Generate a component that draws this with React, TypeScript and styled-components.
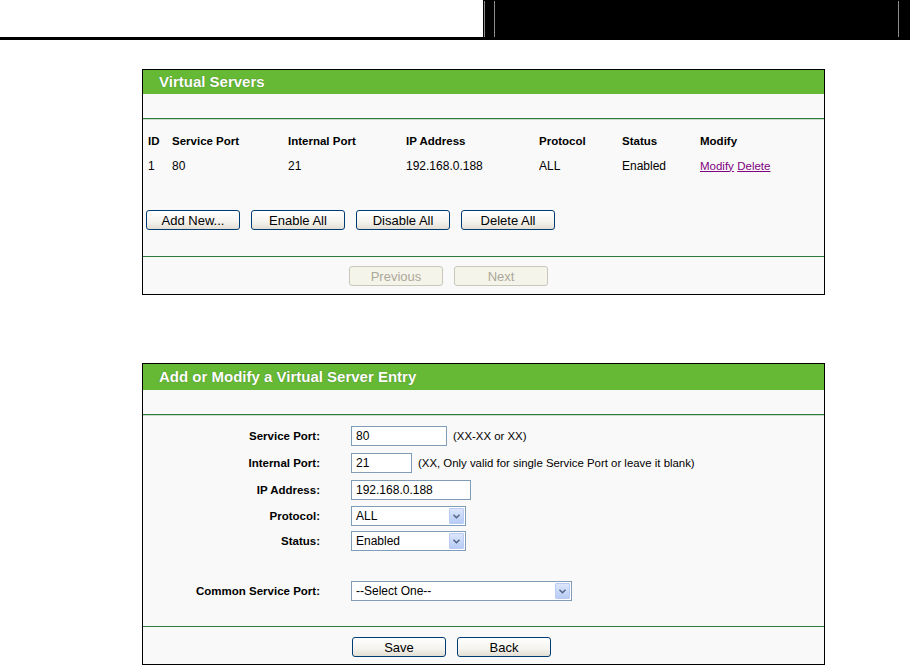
import React from 'react'
import styled, { createGlobalStyle } from 'styled-components'

const GlobalStyle = createGlobalStyle`
  body {
    margin: 0;
    background: #fff;
    font-family: "Liberation Sans", Arial, sans-serif;
    color: #000;
  }
`

const servers = [
  { id: 1, service: '80', internal: '21', ip: '192.168.0.188', protocol: 'ALL', status: 'Enabled' },
]

const fields = [
  { label: 'Service Port:', kind: 'input', value: '80', width: 96, hint: '(XX-XX or XX)', gap: 7 },
  { label: 'Internal Port:', kind: 'input', value: '21', width: 61, hint: '(XX, Only valid for single Service Port or leave it blank)', gap: 7 },
  { label: 'IP Address:', kind: 'input', value: '192.168.0.188', width: 120, gap: 6 },
  { label: 'Protocol:', kind: 'select', value: 'ALL', width: 115, gap: 5 },
  { label: 'Status:', kind: 'select', value: 'Enabled', width: 115, gap: 30 },
  { label: 'Common Service Port:', kind: 'select', value: '--Select One--', width: 221, gap: 0 },
]

const Chevron = () => (
  <svg width="7" height="5" viewBox="0 0 7 5">
    <path d="M0.5 0.8 L3.5 3.8 L6.5 0.8" fill="none" stroke="#4d6185" strokeWidth="1.4" />
  </svg>
)

const App = () => {
  return (
    <>
      <GlobalStyle />
      <TopBar>
        <TopLeft />
        <TopRight>
          <VLine $offset={1} />
          <VLine $offset={9} />
          <VLine $offset={403} />
        </TopRight>
      </TopBar>

      <Panel $top={29}>
        <PanelTitle $height={24}>Virtual Servers</PanelTitle>
        <Band />
        <Rule />
        <ServerTable>
          <HeadCell>ID</HeadCell>
          <HeadCell>Service Port</HeadCell>
          <HeadCell>Internal Port</HeadCell>
          <HeadCell>IP Address</HeadCell>
          <HeadCell>Protocol</HeadCell>
          <HeadCell>Status</HeadCell>
          <HeadCell>Modify</HeadCell>
          {servers.map(s => (
            <React.Fragment key={s.id}>
              <Cell>{s.id}</Cell>
              <Cell>{s.service}</Cell>
              <Cell>{s.internal}</Cell>
              <Cell>{s.ip}</Cell>
              <Cell>{s.protocol}</Cell>
              <Cell>{s.status}</Cell>
              <Cell>
                <Link href="#">Modify</Link> <Link href="#">Delete</Link>
              </Cell>
            </React.Fragment>
          ))}
        </ServerTable>
        <ButtonRow>
          <Button>Add New...</Button>
          <Button>Enable All</Button>
          <Button>Disable All</Button>
          <Button>Delete All</Button>
        </ButtonRow>
        <FootRule />
        <Footer $left={206}>
          <Button disabled>Previous</Button>
          <Button disabled>Next</Button>
        </Footer>
      </Panel>

      <Panel $top={68}>
        <PanelTitle $height={26}>Add or Modify a Virtual Server Entry</PanelTitle>
        <Band />
        <Rule />
        <Form>
          {fields.map(f => (
            <FormRow key={f.label} $gap={f.gap}>
              <Label>{f.label}</Label>
              <Control>
                {f.kind === 'input' ? (
                  <TextInput defaultValue={f.value} $width={f.width} />
                ) : (
                  <SelectBox $width={f.width}>
                    <SelectText>{f.value}</SelectText>
                    <ArrowButton>
                      <Chevron />
                    </ArrowButton>
                  </SelectBox>
                )}
                {f.hint && <Hint>{f.hint}</Hint>}
              </Control>
            </FormRow>
          ))}
        </Form>
        <FootRule />
        <Footer $left={209} $top={10} $bottom={7}>
          <Button>Save</Button>
          <Button>Back</Button>
        </Footer>
      </Panel>
    </>
  )
}

export default App

const TopBar = styled.header`
  display: flex;
  height: 40px;
`

const TopLeft = styled.div`
  width: 483px;
  box-sizing: border-box;
  border-bottom: 3px solid #000;
`

const TopRight = styled.div`
  flex: 1;
  display: flex;
  align-items: flex-start;
  background: #000;
`

const VLine = styled.div<{ $offset: number }>`
  width: 1px;
  height: 36px;
  margin-top: 1px;
  margin-left: ${p => p.$offset}px;
  background: #8c8c8c;
`

const Panel = styled.section<{ $top: number }>`
  margin: ${p => p.$top}px 0 0 142px;
  width: 683px;
  box-sizing: border-box;
  border: 1px solid #000;
  background: #f9f9f9;
`

const PanelTitle = styled.h2<{ $height: number }>`
  margin: 0;
  height: ${p => p.$height}px;
  line-height: ${p => p.$height - 1}px;
  padding-left: 16px;
  background: #66b934;
  color: #fff;
  font-size: 15px;
  font-weight: bold;
  text-shadow: 0 0 1px rgba(30, 70, 10, 0.6);
`

const Band = styled.div`
  height: 24px;
`

const Rule = styled.div`
  border-top: 1px solid #2d7a3c;
  border-bottom: 1px solid #c6dcc8;
`

const FootRule = styled.div`
  border-top: 1px solid #2d7a3c;
`

const ServerTable = styled.div`
  display: grid;
  grid-template-columns: 24px 116px 118px 133px 83px 78px auto;
  grid-auto-rows: 25px;
  align-items: center;
  padding: 8px 0 0 5px;
  font-size: 12px;
`

const HeadCell = styled.div`
  font-weight: bold;
  font-size: 11.5px;
`

const Cell = styled.div`
  font-size: 12px;
`

const Link = styled.a`
  color: #800080;
  text-decoration: underline;
  font-size: 11.5px;
`

const ButtonRow = styled.div`
  display: flex;
  gap: 11px;
  padding: 32px 0 26px 3px;
`

const Button = styled.button`
  width: 94px;
  height: 20px;
  padding: 0;
  box-sizing: border-box;
  border: 1px solid #003c74;
  border-radius: 3px;
  background: linear-gradient(#ffffff 0%, #f4f3ee 60%, #e2ded3 100%);
  color: #000;
  font-family: "Liberation Sans", Arial, sans-serif;
  font-size: 13px;

  &:disabled {
    border-color: #c9c7ba;
    background: #f5f4ea;
    color: #aca899;
  }
`

const Footer = styled.div<{ $left: number; $top?: number; $bottom?: number }>`
  display: flex;
  gap: 11px;
  padding: ${p => p.$top ?? 9}px 0 ${p => p.$bottom ?? 8}px ${p => p.$left}px;
`

const Form = styled.div`
  padding: 10px 0 25px;
`

const FormRow = styled.div<{ $gap: number }>`
  display: grid;
  grid-template-columns: 177px auto;
  column-gap: 31px;
  align-items: center;
  margin-bottom: ${p => p.$gap}px;
`

const Label = styled.div`
  text-align: right;
  font-size: 11.5px;
  font-weight: bold;
`

const Control = styled.div`
  display: flex;
  align-items: center;
`

const TextInput = styled.input<{ $width: number }>`
  width: ${p => p.$width}px;
  height: 20px;
  box-sizing: border-box;
  border: 1px solid #7f9db9;
  padding: 0 4px;
  background: #fff;
  font-family: "Liberation Sans", Arial, sans-serif;
  font-size: 12px;
  color: #000;
  outline: none;
`

const SelectBox = styled.div<{ $width: number }>`
  width: ${p => p.$width}px;
  height: 20px;
  box-sizing: border-box;
  border: 1px solid #7f9db9;
  background: #fff;
  display: flex;
  align-items: center;
  padding: 1px;
`

const SelectText = styled.span`
  flex: 1;
  padding-left: 3px;
  font-size: 12px;
`

const ArrowButton = styled.div`
  width: 15px;
  height: 16px;
  box-sizing: border-box;
  border: 1px solid #b9cbf3;
  border-radius: 1px;
  background: linear-gradient(#dce6fb, #b7cbf5);
  display: flex;
  align-items: center;
  justify-content: center;
`

const Hint = styled.span`
  margin-left: 6px;
  font-size: 11.4px;
`
